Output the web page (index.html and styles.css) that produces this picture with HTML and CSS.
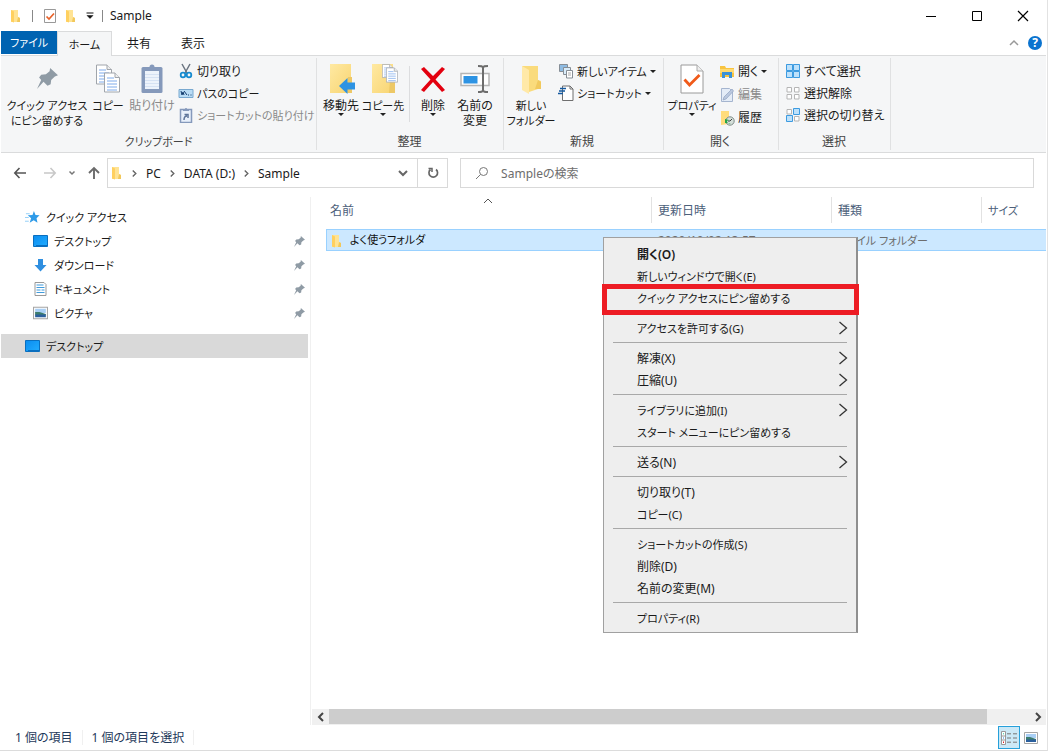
FILE: index.html
```html
<!DOCTYPE html>
<html lang="ja">
<head>
<meta charset="utf-8">
<title>Sample</title>
<link rel="stylesheet" href="styles.css">
</head>
<body>
<svg class="defs" aria-hidden="true">
  <linearGradient id="gFold" x1="0" x2="1" y1="0" y2="1"><stop offset="0" stop-color="#ffe9a2"/><stop offset="1" stop-color="#f8d573"/></linearGradient>
  <linearGradient id="gBlue" x1="0" x2="1" y1="0" y2="1"><stop offset="0" stop-color="#0b8df0"/><stop offset="1" stop-color="#22adff"/></linearGradient>
  <symbol id="folder" viewBox="0 0 12 14"><path d="M1 1h7v7l2 1v4H1z" fill="#ffe394"/><path d="M8 8l2 1v4H7z" fill="#f2c85b"/><path d="M1 1l3 1.500v11L1 12.500z" fill="#ffd05f"/></symbol>
  <symbol id="pin" viewBox="0 0 20 20"><path d="M12.500 0 20 7l-3 1-3.500 3.500-.5 4L10 17l-3.800-3.800L0 20l4-8.500L2 9l2-2.500 4.500-.5L12 3z" fill="#8f9ba5"/></symbol>
  <symbol id="chev" viewBox="0 0 8 10"><path d="M2 1.500l3.500 3.500L2 8.500" fill="none" stroke="currentColor" stroke-width="1.600"/></symbol>
  <symbol id="desktop" viewBox="0 0 15 12"><path d="M.5.500h14v11H.500z" fill="url(#gBlue)" stroke="#0a6fbf"/><path d="M3 10.500h11" stroke="#0a6fbf"/></symbol>
  <symbol id="picture" viewBox="0 0 14 12"><path d="M.5.500h13v11H.500z" fill="#fff" stroke="#a5a5a5"/><path d="M2 2h10v4H2z" fill="#a9cff5"/><path d="M2 5h4l6 2v1H2z" fill="#3c7d6d"/><path d="M2 7.500h10V10H2z" fill="#2b5f9d"/></symbol>
  <symbol id="page" viewBox="0 0 16 20"><path d="M.5.500h10.500l4.500 4.500v14.500H.500z" fill="#fff" stroke="#a0a5ab"/><path d="M11 .500V5h4.500" fill="#eee" stroke="#a0a5ab"/><path d="M3 5.500h7M3 8.500h10M3 11.500h10M3 14.500h10M3 17.500h10" stroke="#7fabeb"/></symbol>
  <symbol id="check" viewBox="0 0 24 30"><path d="M1 1h16l6 6v22H1z" fill="#fff" stroke="#9a9a9a"/><path d="M17 1v6h6" fill="#eee" stroke="#aaa"/><path d="M4.500 15.500l5 5.500L19.500 11" fill="none" stroke="#f05a1a" stroke-width="2.800"/></symbol>
</svg>

<div class="window">
  <header class="titlebar">
    <svg class="i-fold" viewBox="0 0 12 14"><use href="#folder"/></svg>
    <span class="tick"></span>
    <svg class="i-prop" viewBox="0 0 12 14"><path d="M.5.500h11v13H.500z" fill="#fff" stroke="#999"/><path d="M2.500 7.500l2.500 2.500 5-5.500" fill="none" stroke="#e8622a" stroke-width="1.700"/></svg>
    <svg class="i-fold" viewBox="0 0 12 14"><use href="#folder"/></svg>
    <svg class="i-custom" viewBox="0 0 8 7"><path d="M.5 1h7" stroke="#111"/><path d="M1 3.500h6L4 6.500z" fill="#111" stroke="#111" stroke-width=".5"/></svg>
    <span class="tick"></span>
    <h1 class="title">Sample</h1>
    <div class="controls">
      <button aria-label="最小化"><svg viewBox="0 0 12 12"><path d="M1 6.500h10" stroke="#000"/></svg></button>
      <button aria-label="最大化"><svg viewBox="0 0 12 12"><path d="M1.500 1.500h9v9h-9z" fill="none" stroke="#000"/></svg></button>
      <button aria-label="閉じる"><svg viewBox="0 0 12 12"><path d="M1 1l10 10M11 1L1 11" stroke="#000" stroke-width="1.200"/></svg></button>
    </div>
  </header>

  <nav class="tabs">
    <button class="tab file kana">ファイル</button>
    <button class="tab active kana">ホーム</button>
    <button class="tab">共有</button>
    <button class="tab">表示</button>
    <span class="tab-tools">
      <button aria-label="リボンの最小化"><svg class="s10" viewBox="0 0 10 10"><path d="M1 7l4-4 4 4" fill="none" stroke="#999" stroke-width="1.500"/></svg></button>
      <button class="help" aria-label="ヘルプ">?</button>
    </span>
  </nav>

  <section class="ribbon">
    <div class="group g-clip">
      <div class="tools">
        <button class="big w82 kana"><svg viewBox="0 0 34 34"><use href="#pin" x="7" y="6" width="21" height="21"/></svg><span>クイック アクセス<br>にピン留めする</span></button>
        <button class="big w40 kana"><svg viewBox="0 0 34 34"><use href="#page" x="5" y="2" width="16" height="21"/><use href="#page" x="13" y="10" width="16" height="21"/></svg><span>コピー</span></button>
        <button class="big w48 off"><svg viewBox="0 0 34 34"><rect x="6.500" y="5" width="21" height="26" rx="1.500" fill="#8599bb"/><path d="M10 9h14v18H10z" fill="#edf3fb"/><path d="M10 12.500h14M10 15.500h14M10 18.500h14M10 21.500h14M10 24.500h14" stroke="#d6e2f3"/><path d="M11 9V5h3.500a2.500 2.500 0 0 1 5 0H23v4z" fill="#8599bb"/></svg><span>貼り付け</span></button>
        <div class="small">
          <button><svg viewBox="0 0 16 16"><path d="M4 1l5 9M12 1L7 10" stroke="#6a7480" stroke-width="1.500"/><circle cx="5" cy="12" r="2.300" fill="none" stroke="#168bd0" stroke-width="1.800"/><circle cx="11" cy="12" r="2.300" fill="none" stroke="#168bd0" stroke-width="1.800"/></svg>切り取り</button>
          <button class="kana"><svg viewBox="0 0 16 16"><path d="M1 4.500h14v8H1z" fill="#b9dcf5" stroke="#79a9d0"/><path d="M3 6l1 4 1-3 1 3M6 6l3 4M10 10h1M12.500 10h1" fill="none" stroke="#123b6d"/></svg>パスのコピー</button>
          <button class="off kana"><svg viewBox="0 0 16 16"><rect x="2.500" y="2.500" width="11" height="13" fill="#e8f0fb" stroke="#8599bb" stroke-width="1.500"/><path d="M5 4V2h2a1 1 0 0 1 2 0h2v2z" fill="#8599bb"/><path d="M6 13c0-3 1-4 3-4M6.500 7.500H10V11" fill="none" stroke="#5d7499" stroke-width="1.500"/></svg>ショートカットの貼り付け</button>
        </div>
      </div>
      <h2 class="kana">クリップボード</h2>
    </div>

    <div class="group g-org">
      <div class="tools">
        <button class="big w40"><svg viewBox="0 0 34 34"><path d="M6 2h21v29H6z" fill="url(#gFold)"/><path d="M24 15h4v16h-6z" fill="#edc866"/><path d="M31 20.500H23.500V16L15 24l8.500 8v-4.500H31z" fill="#2d93e3"/></svg><span>移動先</span><i class="drop"></i></button>
        <button class="big w44 kana"><svg viewBox="0 0 34 34"><path d="M6 2h21v29H6z" fill="url(#gFold)"/><path d="M24 18h5v13h-6z" fill="#edc866"/><use href="#page" x="16" y="1" width="11" height="16"/><use href="#page" x="20" y="5" width="12" height="16"/></svg><span>コピー先</span><i class="drop"></i></button>
        <span class="rule"></span>
        <button class="big w40"><svg viewBox="0 0 34 34"><path d="M5 7l3-2 9 9 9-9 3 2-9.500 10.500L29 28l-3 2-9-10-9 10-3-2 9.500-10.500z" fill="#e3000f"/></svg><span>削除</span><i class="drop"></i></button>
        <button class="big w44"><svg viewBox="0 0 34 34"><path d="M3 11.500h28v12H3z" fill="#fff" stroke="#b5b5b5" stroke-width="1.500"/><path d="M5.500 14h14v7.500h-14z" fill="#2d93e3"/><path d="M20 4c3 0 5 0 5 2 0-2 2-2 5-2M25 6v22M20 30c3 0 5 0 5-2 0 2 2 2 5 2" fill="none" stroke="#6d6d6d" stroke-width="2"/></svg><span>名前の<br>変更</span></button>
      </div>
      <h2>整理</h2>
    </div>

    <div class="group g-new">
      <div class="tools">
        <button class="big w50 kana"><svg viewBox="0 0 34 34"><path d="M8 4h16v14l3 1v7l-12 4z" fill="#fadb7c"/><path d="M8 4l7 4v24l-7-4z" fill="#ffe9a8"/><path d="M24 18l3 2v7h-6z" fill="#f1c95e"/></svg><span>新しい<br>フォルダー</span></button>
        <div class="small">
          <button class="kana"><svg viewBox="0 0 16 16"><path d="M1.500 1.500h8v7h-8z" fill="#8ebce4" stroke="#868e96"/><path d="M5.500 4.500h7v7h-7z" fill="#d9ecfa" stroke="#868e96"/><path d="M8.500 7.500h6v7.500h-6z" fill="#fff" stroke="#868e96"/><path d="M10 10h3M10 12h3" stroke="#aaa"/></svg>新しいアイテム<i class="drop"></i></button>
          <button class="kana"><svg viewBox="0 0 16 16"><path d="M4.500 1H12l3 3v11.500H4.500z" fill="#fff" stroke="#6f6f6f"/><path d="M12 1v3h3" fill="none" stroke="#6f6f6f"/><path d="M2 3.500h6M1 6h6M0 8.500h5" stroke="#155aa0" stroke-width="1.400"/></svg>ショートカット<i class="drop"></i></button>
        </div>
      </div>
      <h2>新規</h2>
    </div>

    <div class="group g-open">
      <div class="tools">
        <button class="big w50 kana"><svg viewBox="0 0 34 34"><use href="#check" x="5" y="2" width="24" height="30"/></svg><span>プロパティ</span><i class="drop"></i></button>
        <div class="small">
          <button><svg viewBox="0 0 16 16"><path d="M1 2h5l1 2h8v9H1z" fill="#f8c440"/><path d="M1 5h14v4H1z" fill="#ffda70"/><path d="M3 14V8h10v6h-3v-3H6v3z" fill="#3a92d8"/></svg>開く<i class="drop"></i></button>
          <button class="off"><svg viewBox="0 0 16 16"><path d="M2.500 1.500h8l3 3v10h-11z" fill="#e4ecf7" stroke="#a5b5cf"/><path d="M4 13l1-3L13 2l1.500 2L7 12z" fill="#bac8df" stroke="#8fa2c0" stroke-width=".7"/></svg>編集</button>
          <button><svg viewBox="0 0 16 16"><path d="M2 1h8v13l-8 1z" fill="#ffdc7c"/><circle cx="11" cy="11" r="4.200" fill="#d5dfda" stroke="#7f8d89"/><path d="M11 11l2-2M11 11h-2" stroke="#444"/><path d="M6 13V9l4 1-2 1c0 2 2 3 4 2" fill="#25a447"/></svg>履歴</button>
        </div>
      </div>
      <h2>開く</h2>
    </div>

    <div class="group g-sel">
      <div class="tools">
        <div class="small">
          <button><svg viewBox="0 0 16 16"><path d="M1 1h14v14H1z" fill="#a9d6f7"/><path d="M1.500 1.500h6v6h-6zM8.500 1.500h6v6h-6zM1.500 8.500h6v6h-6zM8.500 8.500h6v6h-6z" fill="#bde1fb" stroke="#3d9be0"/></svg>すべて選択</button>
          <button><svg viewBox="0 0 16 16"><path d="M2 2.500h4.500V7H2zM9.500 2.500H14V7H9.500zM2 9.500h4.500V14H2zM9.500 9.500H14V14H9.500z" fill="#fff" stroke="#b5b5b5"/></svg>選択解除</button>
          <button><svg viewBox="0 0 16 16"><path d="M2 2.500h4.500V7H2zM9.500 9.500H14V14H9.500z" fill="#fff" stroke="#b5b5b5"/><path d="M8.500 1.500h6v6h-6zM1.500 8.500h6v6h-6z" fill="#bde1fb" stroke="#3d9be0"/></svg>選択の切り替え</button>
        </div>
      </div>
      <h2>選択</h2>
    </div>
  </section>

  <div class="address">
    <div class="history">
      <button aria-label="戻る"><svg class="s14" viewBox="0 0 14 14"><path d="M13 7H2M6.500 2L1.800 7l4.700 5" fill="none" stroke="#555" stroke-width="1.600"/></svg></button>
      <button aria-label="進む"><svg class="s14" viewBox="0 0 14 14"><path d="M1 7h11M7.500 2l4.700 5-4.700 5" fill="none" stroke="#c8c8c8" stroke-width="1.600"/></svg></button>
      <button aria-label="最近表示した場所"><svg class="s8" viewBox="0 0 8 8"><path d="M1.500 2.500L4 5l2.500-2.500" fill="none" stroke="#777" stroke-width="1.500"/></svg></button>
      <button aria-label="上へ"><svg class="s14" viewBox="0 0 14 14"><path d="M7 13V2M2 7l5-5 5 5" fill="none" stroke="#6b6b6b" stroke-width="1.900"/></svg></button>
    </div>
    <div class="path">
      <svg class="i-fold" viewBox="0 0 12 14"><use href="#folder"/></svg>
      <svg class="sep" viewBox="0 0 8 10"><use href="#chev"/></svg><a href="#pc">PC</a>
      <svg class="sep" viewBox="0 0 8 10"><use href="#chev"/></svg><a href="#data">DATA (D:)</a>
      <svg class="sep" viewBox="0 0 8 10"><use href="#chev"/></svg><a href="#sample">Sample</a>
      <button class="expand" aria-label="以前の場所"><svg class="s10" viewBox="0 0 10 10"><path d="M1 3l4 4 4-4" fill="none" stroke="#666" stroke-width="2"/></svg></button>
      <button class="reload" aria-label="更新"><svg class="s12" viewBox="0 0 12 12"><path d="M3.500 2.500a4.300 4.300 0 1 0 5.500 0" fill="none" stroke="#666" stroke-width="1.700"/><path d="M1.500 1.500H5V5" fill="none" stroke="#666" stroke-width="1.500"/></svg></button>
    </div>
    <label class="search">
      <svg class="s14" viewBox="0 0 14 14"><circle cx="8.500" cy="5.500" r="4" fill="none" stroke="#777"/><path d="M5.500 8.500L1 13" stroke="#777"/></svg>
      <input type="search" placeholder="Sampleの検索" aria-label="Sampleの検索">
    </label>
  </div>

  <main class="body">
    <aside class="side kana">
      <a class="node root" href="#quick"><svg viewBox="0 0 16 14"><path d="M9.500.500l1.700 4.300 4.300.4-3.200 3 1 4.800-4-2.500-4.300 2.500 1.500-4.800L3 5.200l5-.4z" fill="#2f9be8"/><path d="M1 3.500h4M0 7.500h4M0 11.500h4" stroke="#8fcdf7"/></svg><span>クイック アクセス</span></a>
      <a class="node" href="#desk"><svg viewBox="0 0 15 12"><use href="#desktop"/></svg><span>デスクトップ</span><svg class="i-pin" viewBox="0 0 20 20"><use href="#pin"/></svg></a>
      <a class="node" href="#down"><svg viewBox="0 0 14 14"><path d="M4.500 1h5v6H13L7 13.500 1 7h3.500z" fill="#2f8fe0"/></svg><span>ダウンロード</span><svg class="i-pin" viewBox="0 0 20 20"><use href="#pin"/></svg></a>
      <a class="node" href="#docs"><svg viewBox="0 0 14 14"><path d="M1.500.500h9l2 2v11h-11z" fill="#fff" stroke="#999"/><path d="M3 3h7M3 5.500h8M3 8h4M8 8h3M3 10.500h8" stroke="#3f9bdd"/></svg><span>ドキュメント</span><svg class="i-pin" viewBox="0 0 20 20"><use href="#pin"/></svg></a>
      <a class="node" href="#pics"><svg viewBox="0 0 14 12"><use href="#picture"/></svg><span>ピクチャ</span><svg class="i-pin" viewBox="0 0 20 20"><use href="#pin"/></svg></a>
      <a class="node root selected" href="#desktop-root"><svg viewBox="0 0 15 12"><use href="#desktop"/></svg><span>デスクトップ</span></a>
    </aside>

    <section class="list">
      <table>
        <colgroup><col class="c-name"><col class="c-date"><col class="c-kind"><col></colgroup>
        <thead><tr>
          <th><div>名前<svg class="sort" viewBox="0 0 10 6"><path d="M1 5l4-4 4 4" fill="none" stroke="#555"/></svg></div></th>
          <th><div>更新日時</div></th><th><div>種類</div></th><th class="kana"><div>サイズ</div></th>
        </tr></thead>
        <tbody><tr>
          <td class="name kana"><svg class="i-fold" viewBox="0 0 12 14"><use href="#folder"/></svg>よく使うフォルダ</td>
          <td>2020/10/02 13:57</td><td class="kana">ファイル フォルダー</td><td></td>
        </tr></tbody>
      </table>
      <div class="scroll">
        <button aria-label="左へ"><svg class="s8" viewBox="0 0 8 10"><path d="M6 1L2 5l4 4" fill="none" stroke="#444" stroke-width="2"/></svg></button>
        <div class="track"><div class="thumb"></div></div>
        <button aria-label="右へ"><svg class="s8" viewBox="0 0 8 10"><path d="M2 1l4 4-4 4" fill="none" stroke="#444" stroke-width="2"/></svg></button>
      </div>

      <div class="menu" role="menu">
        <button role="menuitem" class="strong">開く(O)</button>
        <button role="menuitem" class="kana">新しいウィンドウで開く(E)</button>
        <button role="menuitem" class="marked kana">クイック アクセスにピン留めする</button>
        <hr class="clear">
        <button role="menuitem" class="kana">アクセスを許可する(G)<svg viewBox="0 0 10 14"><path d="M1.500 1l7 6-7 6" fill="none" stroke="#333" stroke-width="1.300"/></svg></button>
        <hr>
        <button role="menuitem">解凍(X)<svg viewBox="0 0 10 14"><path d="M1.500 1l7 6-7 6" fill="none" stroke="#333" stroke-width="1.300"/></svg></button>
        <button role="menuitem">圧縮(U)<svg viewBox="0 0 10 14"><path d="M1.500 1l7 6-7 6" fill="none" stroke="#333" stroke-width="1.300"/></svg></button>
        <hr>
        <button role="menuitem" class="kana">ライブラリに追加(I)<svg viewBox="0 0 10 14"><path d="M1.500 1l7 6-7 6" fill="none" stroke="#333" stroke-width="1.300"/></svg></button>
        <button role="menuitem" class="kana">スタート メニューにピン留めする</button>
        <hr>
        <button role="menuitem">送る(N)<svg viewBox="0 0 10 14"><path d="M1.500 1l7 6-7 6" fill="none" stroke="#333" stroke-width="1.300"/></svg></button>
        <hr>
        <button role="menuitem">切り取り(T)</button>
        <button role="menuitem" class="kana">コピー(C)</button>
        <hr>
        <button role="menuitem" class="kana">ショートカットの作成(S)</button>
        <button role="menuitem">削除(D)</button>
        <button role="menuitem">名前の変更(M)</button>
        <hr>
        <button role="menuitem" class="kana">プロパティ(R)</button>
      </div>
    </section>
  </main>

  <footer class="status">
    <span>1 個の項目</span><span>1 個の項目を選択</span>
    <div class="views">
      <button class="on" aria-label="詳細表示"><svg viewBox="0 0 18 14"><path d="M1.500.500h4v13h-4zM1.500 5h4M1.500 9h4" fill="#fff" stroke="#999"/><path d="M3 2.800h1" stroke="#2c9"/><path d="M3 7h1" stroke="#27d"/><path d="M3 11.200h1" stroke="#d22" stroke-width="1.500"/><path d="M7 2.800h4M13 2.800h4M7 7h4M13 7h4M7 11.200h4M13 11.200h4" stroke="#777"/></svg></button>
      <button aria-label="大アイコン"><svg class="s14" viewBox="0 0 14 12"><use href="#picture"/></svg></button>
    </div>
  </footer>
</div>
</body>
</html>
```

FILE: styles.css
```css
* { box-sizing: border-box; }
body {
  margin: 0;
  font: 12px/15px "Noto Sans", "Noto Sans CJK JP", sans-serif;
  font-feature-settings: "palt";
  color: #1a1a1a;
  background: #fff;
}
button {
  font: inherit;
  font-feature-settings: inherit;
  color: inherit;
  background: none;
  border: 0;
  padding: 0;
  white-space: nowrap;
}
a { color: inherit; text-decoration: none; }
h1, h2 { margin: 0; font: inherit; }
svg { display: block; flex: none; }
.kana { font-size: 11px; }
.defs { position: absolute; width: 0; height: 0; }
.s8 { width: 8px; height: 10px; }
.s10 { width: 10px; height: 10px; }
.s12 { width: 12px; height: 12px; }
.s14 { width: 14px; height: 14px; }
.i-fold { width: 12px; height: 14px; }

.window {
  display: flex;
  flex-direction: column;
  min-height: 100vh;
  padding: 0 1px;
  border-right: 1px solid #e2e2e2;
  border-bottom: 1px solid #dcdcdc;
}

.titlebar { display: flex; align-items: center; height: 31px; padding-left: 9px; }
.tick { width: 1px; height: 12px; margin: 0 11px 0 10px; background: #888; }
.i-prop { width: 12px; height: 14px; margin-right: 9px; }
.i-custom { width: 8px; height: 7px; margin-left: 9px; }
.i-custom + .tick { margin: 0 7px 0 8px; }
.controls { display: flex; margin-left: auto; }
.controls button { display: grid; place-items: center; width: 46px; height: 30px; }
.controls svg { width: 12px; height: 12px; }

.tabs { display: flex; height: 25px; border-bottom: 1px solid #dadbdc; }
.tab { width: 54px; height: 24px; }
.file { width: 56px; height: 23px; background: #0063b1; color: #fff; }
.active { width: 55px; height: 25px; background: #f5f6f7; border: 1px solid #dadbdc; border-bottom: 0; }
.tab-tools { display: flex; align-items: center; gap: 9px; margin-left: auto; padding-right: 4px; }
.help {
  width: 14px;
  height: 14px;
  border-radius: 50%;
  background: #0a73cf;
  color: #fff;
  font-weight: 700;
  line-height: 14px;
}

.ribbon { display: flex; height: 97px; padding: 2px 0; background: #f5f6f7; border-bottom: 1px solid #dadbdc; }
.group { display: flex; flex-direction: column; flex: none; border-right: 1px solid #e0e1e2; }
.g-clip { width: 316px; padding-left: 5px; }
.g-org { width: 187px; padding-left: 4px; }
.g-new { width: 160px; padding-left: 2px; }
.g-open { width: 115px; padding-left: 3px; }
.g-sel { width: 112px; padding-left: 4px; }
.group h2 { margin-top: auto; padding: 0 5px 1px 0; text-align: center; color: #444; }
.tools { display: flex; }
.big { display: flex; flex: none; flex-direction: column; align-items: center; padding-top: 4px; }
.big svg { width: 34px; height: 34px; margin-bottom: 2px; }
.w82 { width: 82px; }
.w40 { width: 40px; }
.w44 { width: 44px; }
.w48 { width: 48px; }
.w50 { width: 50px; }
.rule { width: 1px; height: 56px; margin: 8px 3px 0 4px; background: #dcdddf; }
.drop { border: 3px solid transparent; border-top-color: #222; border-bottom: 0; }
.small { display: flex; flex-direction: column; padding: 2px 0 0 2px; }
.small button { display: flex; align-items: center; gap: 3px; height: 22px; }
.small svg { width: 16px; height: 16px; }
.g-open .small button { height: 23px; }
.off { color: #8a8a8a; }

.address { display: flex; padding: 5px 12px 5px 0; }
.history { display: flex; flex: none; align-items: center; width: 106px; padding-left: 12px; gap: 16px; }
.history button:nth-child(3) { margin: 0 -5px; }
.path { display: flex; align-items: center; flex: 344 1 0; height: 30px; padding-left: 3px; border: 1px solid #d9d9d9; }
.path .sep { width: 7px; height: 9px; margin: 0 8px; color: #666; }
.expand { display: grid; place-items: center; width: 28px; height: 28px; margin-left: auto; }
.reload { display: grid; place-items: center; width: 30px; height: 28px; border-left: 1px solid #d9d9d9; }
.search { display: flex; align-items: center; flex: 571 1 0; height: 30px; margin-left: 12px; padding-left: 14px; gap: 12px; border: 1px solid #d9d9d9; }
.search input { flex: 1; min-width: 0; padding: 0; border: 0; outline: 0; font: inherit; font-feature-settings: inherit; }
.search input::placeholder { color: #6d6d6d; opacity: 1; }

.body { display: flex; flex: 1; padding-top: 4px; }
.side { flex: none; width: 310px; padding: 8px 2px 0 0; border-right: 1px solid #f0f0f0; }
.node { display: flex; align-items: center; gap: 6px; height: 24px; padding: 0 3px 0 32px; }
.node > svg { width: 15px; height: 14px; }
.node .i-pin { width: 11px; height: 11px; margin-left: auto; }
.root { padding-left: 24px; }
.selected { margin-top: 9px; background: #d9d9d9; }

.list { position: relative; display: flex; flex-direction: column; flex: 1; min-width: 0; }
table { margin-left: 15px; table-layout: fixed; border-spacing: 0; }
.c-name { width: 326px; }
.c-date { width: 180px; }
.c-kind { width: 150px; }
th { padding: 0 0 6px; text-align: left; font-weight: 400; color: #4c607a; }
th div { position: relative; height: 26px; padding: 6px 0 0 6px; border-right: 1px solid #e2e2e2; }
th:first-child div { padding-left: 4px; }
th:last-child div { border-right: 0; }
.sort { position: absolute; top: 1px; left: 50%; width: 10px; height: 6px; margin-left: -6px; }
td { height: 22px; padding: 0 6px; background: #cce8ff; border: 1px solid #99d1ff; border-width: 1px 0; color: #6d6d6d; }
.name { color: #111; border-left-width: 1px; padding-left: 4px; }
.name svg { display: inline-block; margin-right: 7px; vertical-align: middle; }

.scroll { display: flex; height: 16px; margin: auto 0 0 1px; background: #f0f0f0; }
.scroll button { display: grid; place-items: center; width: 17px; }
.track { flex: 1; }
.thumb { width: 94%; height: 15px; background: #cdcdcd; }

.menu {
  position: absolute;
  top: 40px;
  left: 292px;
  width: 255px;
  padding: 5px 0 3px;
  background: #eee;
  border: 1px solid #a0a0a0;
  border-right: 2px solid #8f8f8f;
}
.menu button { position: relative; display: flex; align-items: center; justify-content: space-between; width: 100%; height: 22px; padding: 0 8px 0 33px; }
.menu svg { width: 10px; height: 14px; }
.menu hr { height: 1px; margin: 3px 9px 4px; border: 0; background: #a8a8a8; }
.menu hr.clear { background: none; }
.strong { font-weight: 600; }
.marked::after { content: ""; position: absolute; inset: -3px -3px -6px -2px; border: 5px solid #ed1c24; }

.status { display: flex; align-items: center; height: 25px; padding-left: 14px; color: #1e395b; }
.status span { padding-right: 9px; margin-right: 9px; border-right: 1px solid #f0f0f0; }
.views { display: flex; align-items: center; margin-left: auto; padding-right: 8px; gap: 4px; }
.views .on { display: grid; place-items: center; width: 22px; height: 23px; background: #cbe8f6; border: 1px solid #26a0da; }
.views .on svg { width: 18px; height: 14px; }
```
